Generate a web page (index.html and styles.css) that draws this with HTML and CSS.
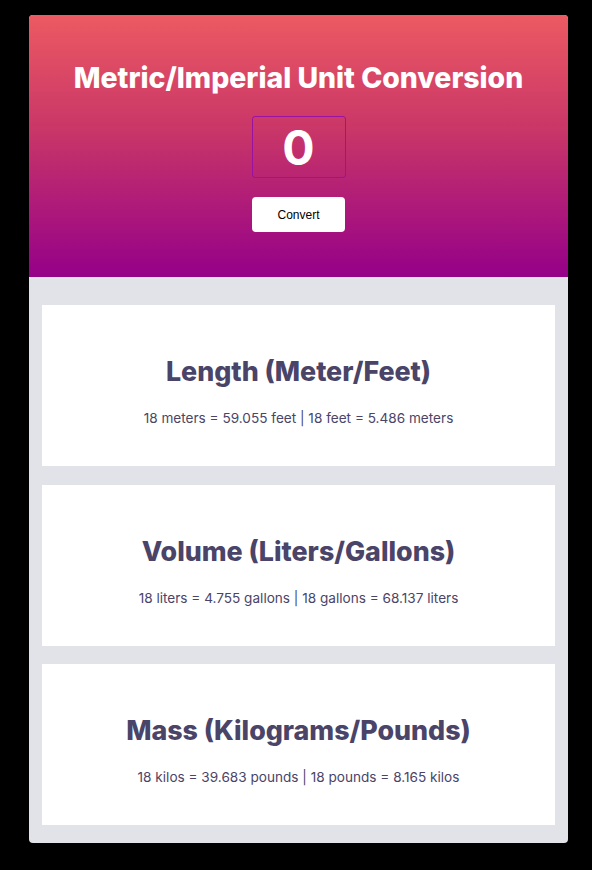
FILE: index.html
```html
<!DOCTYPE html>
<html>
<head>
<meta charset="utf-8">
<link rel="stylesheet" href="styles.css">
</head>
<body>
<div class="app">
  <header class="hero">
    <h1 class="hero-title">Metric/Imperial Unit Conversion</h1>
    <div class="value-box">0</div>
    <button class="convert-btn">Convert</button>
  </header>
  <main class="results">
    <section class="card">
      <h2 class="card-title">Length (Meter/Feet)</h2>
      <p class="card-text">18 meters = 59.055 feet | 18 feet = 5.486 meters</p>
    </section>
    <section class="card">
      <h2 class="card-title">Volume (Liters/Gallons)</h2>
      <p class="card-text">18 liters = 4.755 gallons | 18 gallons = 68.137 liters</p>
    </section>
    <section class="card">
      <h2 class="card-title">Mass (Kilograms/Pounds)</h2>
      <p class="card-text">18 kilos = 39.683 pounds | 18 pounds = 8.165 kilos</p>
    </section>
  </main>
</div>
</body>
</html>
```

FILE: styles.css
```css
html, body {
  margin: 0;
  padding: 0;
  background: #000;
}
body {
  font-family: Inter, "Noto Sans", sans-serif;
}
.app {
  width: 539px;
  margin: 15px 0 0 29px;
  border-radius: 4px;
  overflow: hidden;
  background: #e2e3e8;
}
.hero {
  height: 262px;
  box-sizing: border-box;
  padding-top: 46px;
  display: flex;
  flex-direction: column;
  align-items: center;
  background: linear-gradient(180deg, #ec5a62 0%, #c83568 45%, #950089 100%);
}
.hero-title {
  margin: 0;
  color: #fff;
  font-size: 28.4px;
  line-height: 34px;
  font-weight: 800;
}
.value-box {
  margin-top: 21px;
  width: 94px;
  height: 62px;
  box-sizing: border-box;
  border: 1px solid #9a12a0;
  border-radius: 3px;
  display: flex;
  align-items: center;
  justify-content: center;
  color: #fff;
  font-size: 48px;
  font-weight: 700;
}
.convert-btn {
  margin-top: 19px;
  width: 93px;
  height: 35px;
  border: none;
  border-radius: 4px;
  background: #fff;
  color: #000;
  font-family: "Liberation Sans", Arial, sans-serif;
  font-size: 12px;
  padding: 0;
}
.results {
  padding: 28px 13px 18px;
  display: flex;
  flex-direction: column;
  gap: 18.5px;
}
.card {
  height: 161px;
  background: #fff;
  display: flex;
  flex-direction: column;
  align-items: center;
  padding-top: 50px;
  box-sizing: border-box;
  color: #4a4468;
}
.card-title {
  margin: 0;
  font-size: 26.8px;
  line-height: 32px;
  font-weight: 800;
}
.card-text {
  margin: 22px 0 0;
  font-size: 13.6px;
  line-height: 18px;
}
```
